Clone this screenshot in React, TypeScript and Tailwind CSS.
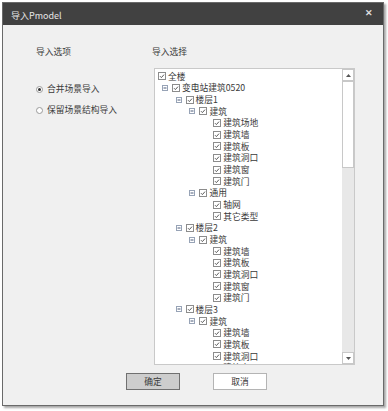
import { FC } from "react";

type Row = { label: string; depth: number; expander?: boolean };

const rows: Row[] = [
  { label: "全楼", depth: 0 },
  { label: "变电站建筑0520", depth: 1, expander: true },
  { label: "楼层1", depth: 2, expander: true },
  { label: "建筑", depth: 3, expander: true },
  { label: "建筑场地", depth: 4 },
  { label: "建筑墙", depth: 4 },
  { label: "建筑板", depth: 4 },
  { label: "建筑洞口", depth: 4 },
  { label: "建筑窗", depth: 4 },
  { label: "建筑门", depth: 4 },
  { label: "通用", depth: 3, expander: true },
  { label: "轴网", depth: 4 },
  { label: "其它类型", depth: 4 },
  { label: "楼层2", depth: 2, expander: true },
  { label: "建筑", depth: 3, expander: true },
  { label: "建筑墙", depth: 4 },
  { label: "建筑板", depth: 4 },
  { label: "建筑洞口", depth: 4 },
  { label: "建筑窗", depth: 4 },
  { label: "建筑门", depth: 4 },
  { label: "楼层3", depth: 2, expander: true },
  { label: "建筑", depth: 3, expander: true },
  { label: "建筑墙", depth: 4 },
  { label: "建筑板", depth: 4 },
  { label: "建筑洞口", depth: 4 },
  { label: "建筑窗", depth: 4 },
];

const indent = ["pl-[3px]", "pl-[7px]", "pl-[20.6px]", "pl-[34.4px]", "pl-[48.2px]"];

const Check: FC = () => (
  <svg width="8" height="8" viewBox="0 0 8 8" className="shrink-0">
    <rect x="0.5" y="0.5" width="7" height="7" fill="#fff" stroke="#8c8c8c" />
    <path d="M2 4.2 L3.4 5.6 L6 2.6" fill="none" stroke="#5a5a5a" strokeWidth="1" />
  </svg>
);

const Expander: FC = () => (
  <svg width="6" height="6" viewBox="0 0 6 6" className="shrink-0">
    <rect x="0.5" y="0.5" width="5" height="5" fill="#fff" stroke="#97a3b6" />
    <path d="M1.5 3 H4.5" stroke="#4a5a78" strokeWidth="1" />
  </svg>
);

const Radio: FC<{ on?: boolean }> = ({ on }) => (
  <svg width="7" height="7" viewBox="0 0 7 7" className="shrink-0">
    <circle cx="3.5" cy="3.5" r="3" fill="#fff" stroke="#9a9a9a" />
    {on && <circle cx="3.5" cy="3.5" r="1.5" fill="#333" />}
  </svg>
);

const App: FC = () => {
  return (
    <div
      className="h-[411px] w-[388px] overflow-hidden bg-white pl-[2px] pt-[2px] text-[8.75px] text-[#3a3a3a]"
      style={{ fontFamily: '"Noto Sans CJK SC", "Noto Sans", sans-serif' }}
    >
      <div className="flex h-[404px] w-[382px] flex-col border border-[#6a6a6a] bg-[#f0f0f0] shadow-[2px_2px_2px_rgba(0,0,0,0.35)]">
        <div className="flex h-[22px] items-center justify-between bg-[#414141] pl-[8px] pr-[10px] text-[#e6e6e6]">
          <span className="pt-[3px] text-[9px]">导入Pmodel</span>
          <span className="-mt-[3px] text-[9px] font-bold leading-none text-[#dcdcdc]">✕</span>
        </div>

        <div className="flex h-[340px]">
          <div className="flex w-[148px] flex-col pl-[33px] pt-[21px]">
            <span className="leading-[12px]">导入选项</span>
            <div className="mt-[25px] flex h-[12px] items-center gap-[4px]">
              <Radio on />
              <span>合并场景导入</span>
            </div>
            <div className="mt-[9px] flex h-[12px] items-center gap-[4px]">
              <Radio />
              <span>保留场景结构导入</span>
            </div>
          </div>

          <div className="flex flex-col pt-[21px]">
            <span className="pl-[1px] leading-[12px]">导入选择</span>
            <div className="ml-[3px] mt-[10px] flex h-[297px] w-[201px] border border-[#c9c9c9] bg-white">
              <div className="flex-1 overflow-hidden pt-[1.5px]">
                {rows.map((r, i) => (
                  <div key={i} className={`flex h-[11.67px] items-center whitespace-nowrap ${indent[r.depth]}`}>
                    {r.depth > 0 && (
                      <span className="flex w-[10px] shrink-0 items-center">{r.expander && <Expander />}</span>
                    )}
                    <Check />
                    <span className="ml-[2px] leading-[11px]">{r.label}</span>
                  </div>
                ))}
              </div>
              <div className="flex w-[12px] flex-col bg-[#e8e8e8]">
                <div className="flex h-[12px] items-center justify-center border border-[#c8c8c8] bg-white">
                  <svg width="5" height="3" viewBox="0 0 5 3">
                    <path d="M0 3 L2.5 0 L5 3 Z" fill="#555" />
                  </svg>
                </div>
                <div className="h-[87px] border border-[#c8c8c8] bg-white" />
                <div className="flex-1" />
                <div className="flex h-[12px] items-center justify-center border border-[#c8c8c8] bg-white">
                  <svg width="5" height="3" viewBox="0 0 5 3">
                    <path d="M0 0 L2.5 3 L5 0 Z" fill="#555" />
                  </svg>
                </div>
              </div>
            </div>
          </div>
        </div>

        <div className="flex gap-[33px] pl-[123px] pt-[8px]">
          <button className="flex h-[17px] w-[54px] items-center justify-center border border-[#707070] bg-[#cdcdcd]">
            确定
          </button>
          <button className="flex h-[17px] w-[54px] items-center justify-center border border-[#b4b4b4] bg-white">
            取消
          </button>
        </div>
      </div>
    </div>
  );
};

export default App;
